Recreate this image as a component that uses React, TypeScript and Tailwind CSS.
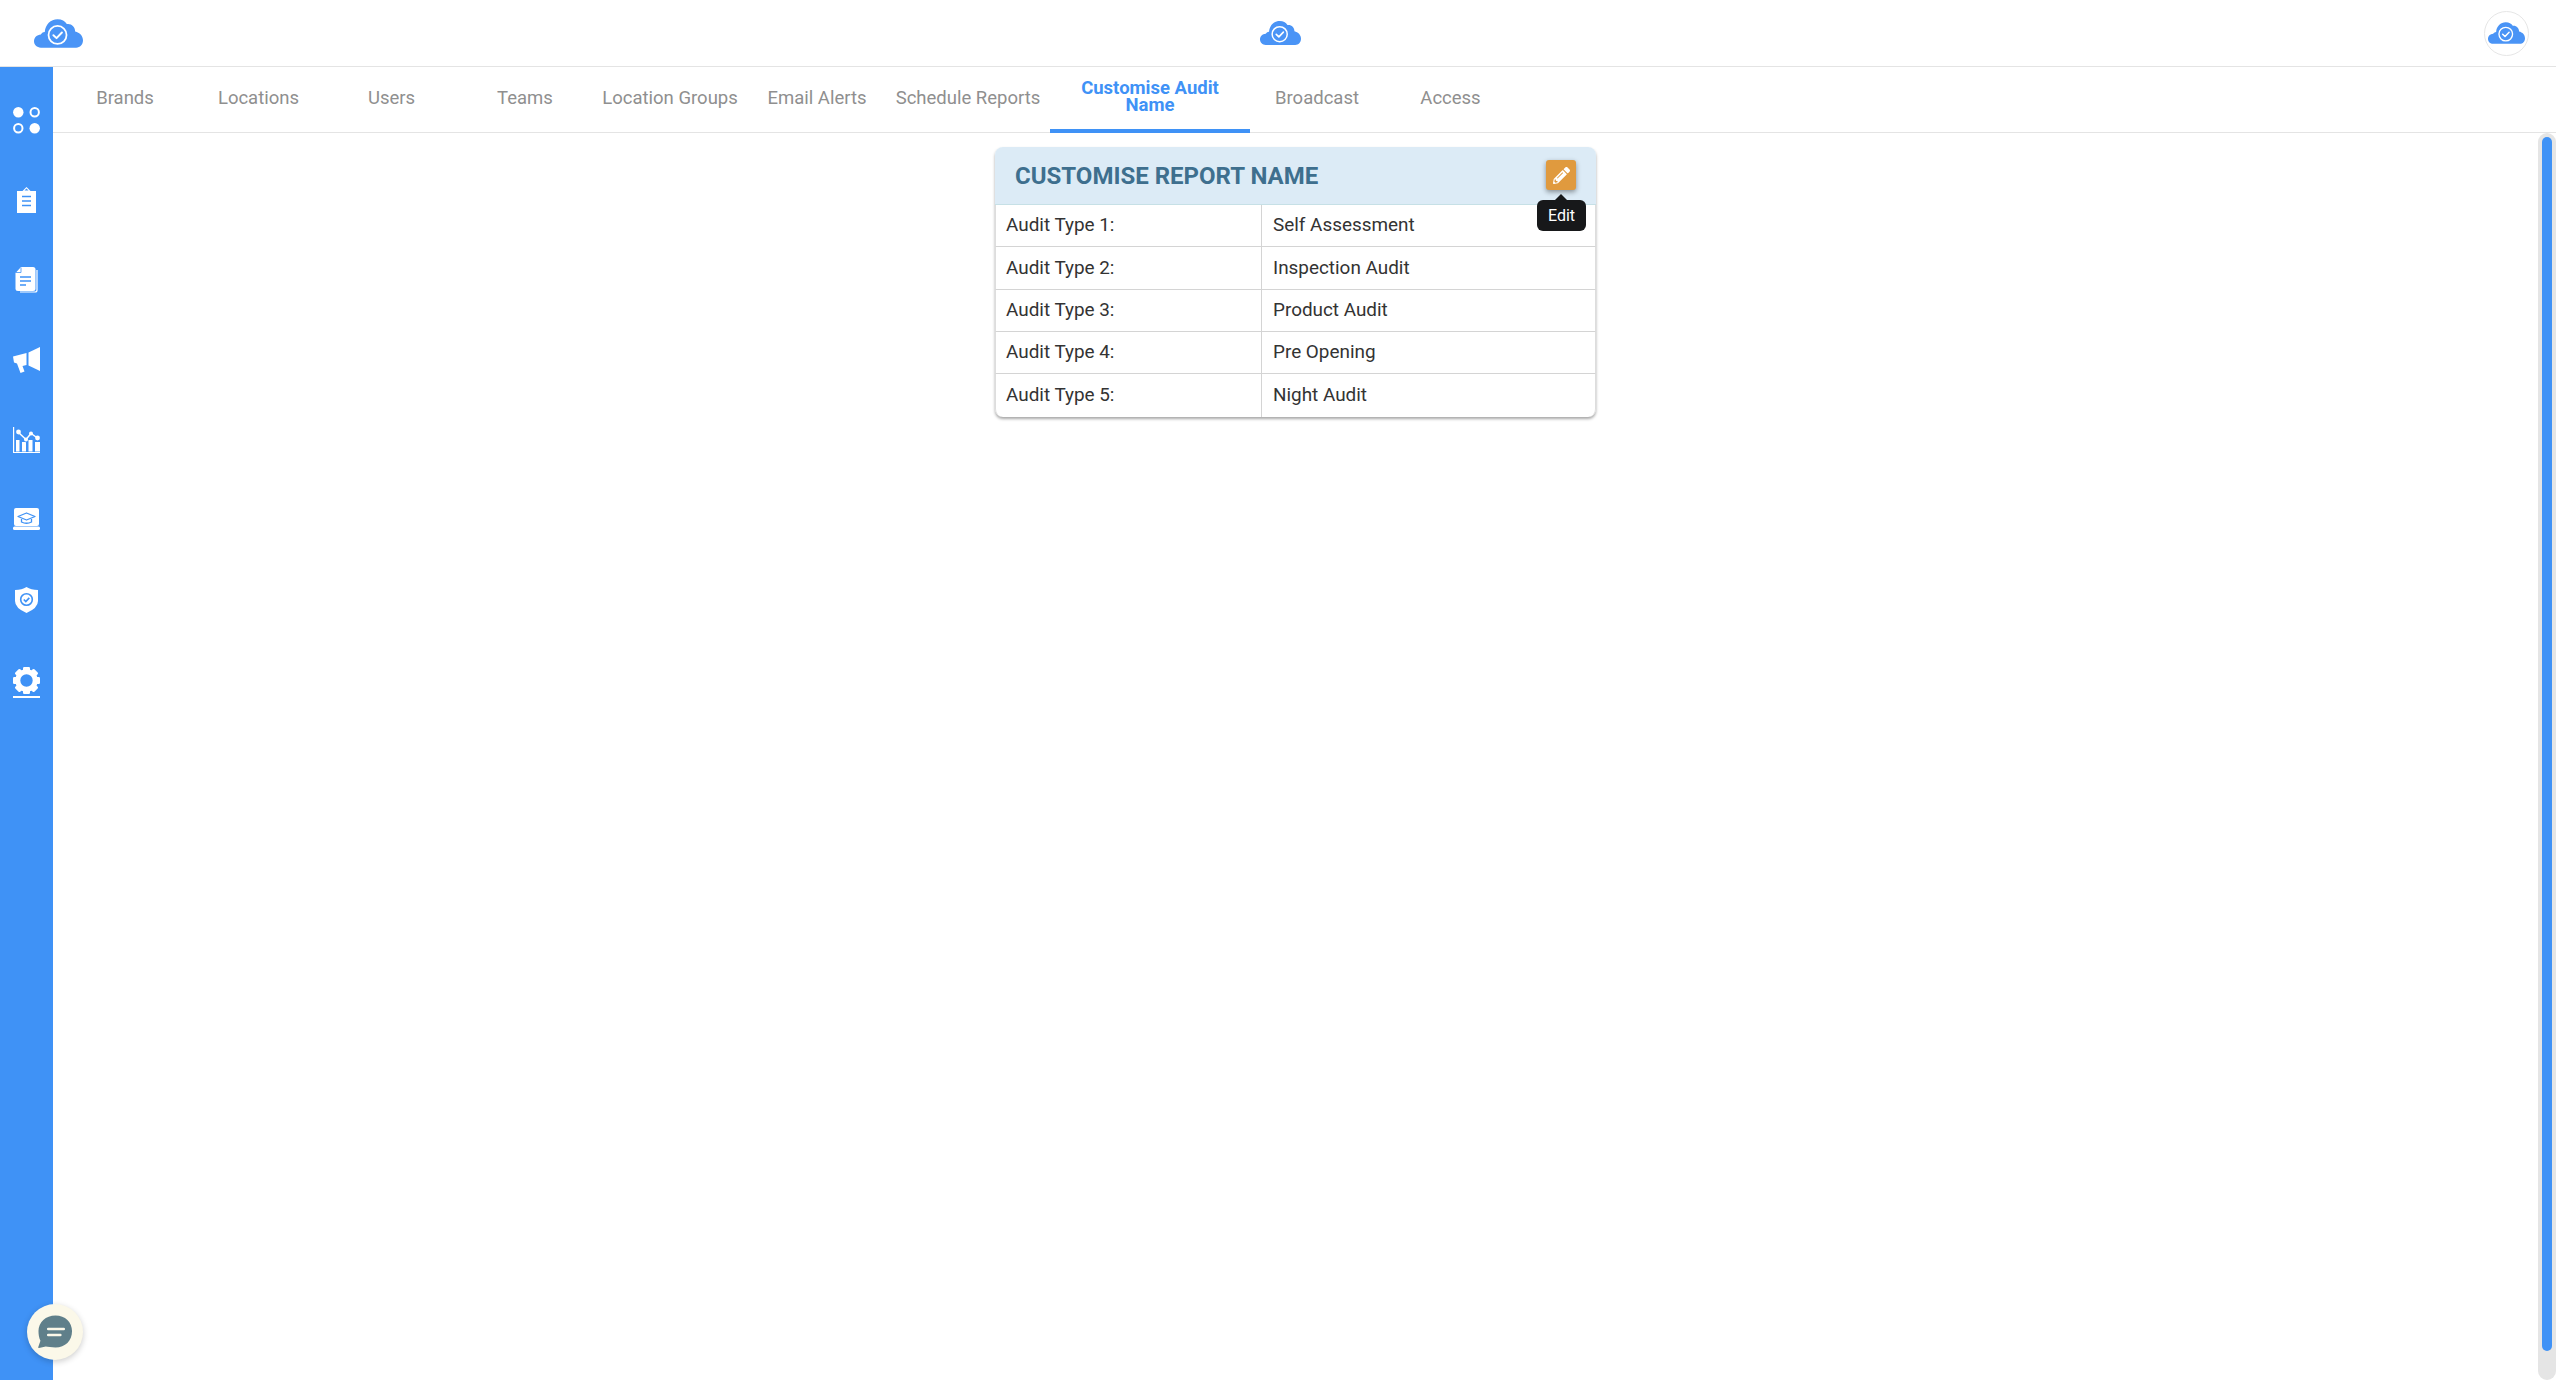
import React from "react";
import { FaPencilAlt } from "react-icons/fa";

function Cloud({ className }: { className: string }) {
  return (
    <svg viewBox="0 0 50 29" className={className}>
      <path
        fill="#4a94f6"
        d="M7 29C3 29 0 26 0 22.500C0 18.500 3 15.800 7 15.500C7.500 14.500 9 13 11 13C11.500 5.500 17 0 24 0C28.500 0 31.500 2 33.500 4.800C38 4 42 7.500 42 12.500C46.500 13.500 50 17 50 21.500C50 26 47 29 43 29Z"
      />
      <circle cx="24" cy="16" r="9.200" fill="none" stroke="#fff" strokeWidth="1.800" />
      <path d="M19.800 16.200L23 19.200L28.500 13.500" fill="none" stroke="#fff" strokeWidth="2" strokeLinecap="round" strokeLinejoin="round" />
    </svg>
  );
}

const blue = "#3f92f6";

function Dots() {
  return (
    <svg viewBox="0 0 27 27" className="w-[27px] h-[27px]">
      <circle cx="5.300" cy="5.300" r="5.200" fill="#fff" />
      <circle cx="21.700" cy="5.300" r="4.200" fill="none" stroke="#fff" strokeWidth="2" />
      <circle cx="5.300" cy="21.300" r="4.200" fill="none" stroke="#fff" strokeWidth="2" />
      <circle cx="21.700" cy="21.300" r="5.200" fill="#fff" />
    </svg>
  );
}
function Clipboard() {
  return (
    <svg viewBox="0 0 19 26" className="w-[19px] h-[26px]">
      <path fill="#fff" d="M0 4H5.500L9.500 0L13.500 4H19V26H0Z" />
      <path fill={blue} d="M7.500 3.500L9.500 1.500L11.500 3.500Z" />
      <path stroke={blue} strokeWidth="1.700" d="M5 9.500H14M5 14H14M5 18.500H14" />
    </svg>
  );
}
function Docs() {
  return (
    <svg viewBox="0 0 23 26" className="w-[23px] h-[26px]">
      <path fill="none" stroke="#fff" strokeWidth="1.200" d="M22 3V23Q22 25 20 25H5" />
      <path fill="#fff" d="M6 0H18Q20.500 0 20.500 2.500V21.500Q20.500 24 18 24H3Q0.500 24 0.500 21.500V6Z" />
      <path fill="none" stroke={blue} strokeWidth="1.500" d="M5 10H16M5 14H16M5 18H11" />
      <path fill="none" stroke={blue} strokeWidth="0.800" d="M6 0.500V5.500H1" />
    </svg>
  );
}
function Mega() {
  return (
    <svg viewBox="0 0 27 26" className="w-[27px] h-[26px]">
      <path fill="#fff" d="M0 9.500L13.500 6V18L9.500 19L11.500 24.500L7.500 26L4 16.500L1 15.500Z" />
      <path fill="#fff" d="M15.500 5.500L27 0V24L15.500 18.500Z" />
    </svg>
  );
}
function Chart() {
  return (
    <svg viewBox="0 0 27 26" className="w-[27px] h-[26px]">
      <path stroke="#fff" strokeWidth="1.200" fill="none" d="M0.600 0V25.500H27" />
      <path fill="#fff" d="M3 13H6.500V24.500H3ZM9 15H13V24.500H9ZM15.500 13H19.500V24.500H15.500ZM22 15H27V24.500H22Z" />
      <path stroke={blue} strokeWidth="3.500" fill="none" d="M5 5L13 13L18 6.500L25 11" />
      <path stroke="#fff" strokeWidth="1.500" fill="none" d="M5.500 5.500L13 12.500L18 6.500L24.500 11" />
      <circle cx="5.500" cy="5" r="2.400" fill="#fff" />
      <circle cx="13" cy="12.500" r="2" fill="#fff" />
      <circle cx="18" cy="6.500" r="2" fill="#fff" />
      <circle cx="24.500" cy="11" r="2.400" fill="#fff" />
    </svg>
  );
}
function Laptop() {
  return (
    <svg viewBox="0 0 27 22" className="w-[27px] h-[22px] mt-[1px]">
      <rect x="1" y="0" width="25" height="18" rx="2" fill="#fff" />
      <rect x="0" y="18.500" width="27" height="3.500" rx="1.500" fill="#fff" />
      <path fill="none" stroke={blue} strokeWidth="1.300" strokeLinejoin="round" d="M13.500 5L22 8.500L13.500 12L5 8.500Z" />
      <path fill="none" stroke={blue} strokeWidth="1.300" d="M8.500 11V14Q13.500 16.500 18.500 14V11" />
    </svg>
  );
}
function Shield() {
  return (
    <svg viewBox="0 0 23 26" className="w-[23px] h-[26px]">
      <path fill="#fff" d="M11.500 0Q16 3 23 3V14Q23 21 11.500 26Q0 21 0 14V3Q7 3 11.500 0Z" />
      <circle cx="11.500" cy="12.500" r="5.800" fill="none" stroke={blue} strokeWidth="1.600" />
      <path fill="none" stroke={blue} strokeWidth="1.700" d="M8.800 12.500L10.800 14.500L14.300 10.800" />
    </svg>
  );
}
function Gear() {
  const teeth = [0, 45, 90, 135, 180, 225, 270, 315];
  return (
    <svg viewBox="0 0 27 31" className="w-[27px] h-[31px]">
      <g transform="translate(13.500 13.500)">
        {teeth.map((a) => (
          <rect key={a} x="-3.500" y="-13.500" width="7" height="6" rx="1.200" fill="#fff" transform={`rotate(${a})`} />
        ))}
        <circle r="8.700" fill="none" stroke="#fff" strokeWidth="5" />
      </g>
      <rect x="0" y="29" width="27" height="2" fill="#fff" />
    </svg>
  );
}

const tabs = [
  { label: "Brands", w: "w-[134px]" },
  { label: "Locations", w: "w-[133px]" },
  { label: "Users", w: "w-[133px]" },
  { label: "Teams", w: "w-[134px]" },
  { label: "Location Groups", w: "w-[156px]" },
  { label: "Email Alerts", w: "w-[138px]" },
  { label: "Schedule Reports", w: "w-[164px]" },
  { label: "Customise Audit Name", w: "w-[200px]", active: true },
  { label: "Broadcast", w: "w-[134px]" },
  { label: "Access", w: "w-[133px]" },
];

const rows = [
  ["Audit Type 1:", "Self Assessment", "h-[42px]"],
  ["Audit Type 2:", "Inspection Audit", "h-[43px]"],
  ["Audit Type 3:", "Product Audit", "h-[42px]"],
  ["Audit Type 4:", "Pre Opening", "h-[42px]"],
  ["Audit Type 5:", "Night Audit", "h-[43px]"],
];

export default function App() {
  return (
    <div className="w-[2556px] h-[1380px] overflow-hidden bg-white flex flex-col relative font-['Roboto',sans-serif]">
      <header className="h-[67px] shrink-0 border-b border-[#e4e4e4] flex items-center justify-between pl-[34px] pr-[27px]">
        <Cloud className="w-[49px] h-[29px]" />
        <Cloud className="w-[41px] h-[24px] mr-[6px]" />
        <div className="w-[45px] h-[45px] rounded-full border border-[#e6e6e6] flex items-center justify-center">
          <Cloud className="w-[37px] h-[22px]" />
        </div>
      </header>
      <div className="flex-1 flex min-h-0">
        <nav className="w-[53px] shrink-0 bg-[#3f92f6] flex flex-col items-center pt-[40px]">
          {[Dots, Clipboard, Docs, Mega, Chart, Laptop, Shield, Gear].map((Icon, i) => (
            <div key={i} className="h-[80px] w-full flex items-start justify-center">
              <Icon />
            </div>
          ))}
        </nav>
        <div className="flex-1 flex flex-col min-w-0">
          <div className="h-[66px] shrink-0 border-b border-[#e4e4e4] flex pl-[5px]">
            {tabs.map((t) => (
              <div
                key={t.label}
                className={`${t.w} shrink-0 flex items-center justify-center text-center text-[18.5px] ${
                  t.active
                    ? "font-bold text-[#3f92f6] leading-[17px] border-b-4 border-[#3f92f6] h-[66px] px-[20px] pb-[3px]"
                    : "text-[#8f8f8f] pb-[2px]"
                }`}
              >
                {t.label}
              </div>
            ))}
          </div>
          <div className="flex-1 flex min-h-0">
            <main className="flex-1 flex justify-center items-start pt-[14px]">
              <section className="w-[601px] rounded-[8px] shadow-[0_2px_3px_rgba(0,0,0,0.35)] bg-white">
                <div className="relative h-[58px] rounded-t-[8px] bg-[#dcebf6] border-b border-[#c6e0e6] flex items-center justify-between pl-[20px] pr-[20px]">
                  <h2 className="text-[24px] font-bold text-[#3e6f8e] leading-none">CUSTOMISE REPORT NAME</h2>
                  <button className="w-[30px] h-[30px] -mt-[1px] rounded-[3px] bg-[#e09a3e] flex items-center justify-center shadow-[0_2px_5px_rgba(0,0,0,0.4)]">
                    <FaPencilAlt className="text-white w-[17px] h-[17px]" />
                  </button>
                  <div className="absolute left-[542px] top-[53px] w-[49px] h-[31px] rounded-[6px] bg-[#17181a] text-white text-[16px] flex items-center justify-center z-10">
                    Edit
                    <span className="absolute -top-[6px] left-[18px] w-0 h-0 border-l-[6px] border-r-[6px] border-b-[6px] border-l-transparent border-r-transparent border-b-[#17181a]" />
                  </div>
                </div>
                {rows.map(([a, b, h], i) => (
                  <div
                    key={a}
                    className={`flex ${h} text-[18.900px] text-[#333333] border-x border-[#dddddd] ${
                      i < 4 ? "border-b border-b-[#d4d4d4]" : "rounded-b-[8px]"
                    }`}
                  >
                    <div className="w-[266px] pl-[10px] flex items-center border-r border-[#d4d4d4]">{a}</div>
                    <div className="flex-1 pl-[11px] flex items-center">{b}</div>
                  </div>
                ))}
              </section>
            </main>
            <div className="w-[18px] shrink-0 bg-[#e5e5e5] rounded-[9px] px-[4px] pt-[4px] pb-[29px] flex">
              <div className="w-full rounded-[6px] bg-[#3f92f6]" />
            </div>
          </div>
        </div>
      </div>
      <button className="absolute left-[27px] top-[1304px] w-[56px] h-[56px] rounded-full bg-[#fbf8e9] shadow-[0_2px_6px_rgba(0,0,0,0.2)] flex items-center justify-center">
        <svg viewBox="0 0 36 34" className="w-[35px] h-[34px]">
          <path fill="#5f7f8a" d="M18 0C28 0 35 7 35 16C35 26 28 33 18 33C14 33 10 32 8 32L1 33.500C0.500 33.500 0 33 0.300 32.500L2.500 26C1 23 0.500 19.500 0.500 16C0.500 7 8 0 18 0Z" />
          <path stroke="#fbf8e9" strokeWidth="2.600" strokeLinecap="round" d="M10.500 14H26.500M10.500 20H23" />
        </svg>
      </button>
    </div>
  );
}
